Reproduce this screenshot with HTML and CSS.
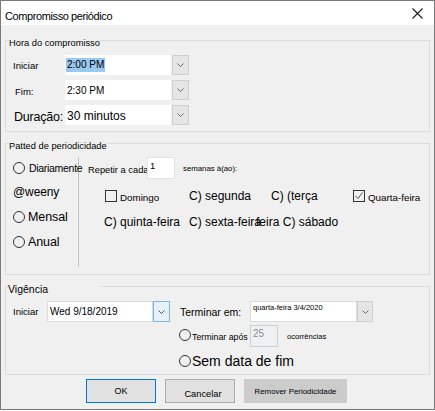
FILE: index.html
```html
<!DOCTYPE html>
<html lang="pt">
<head>
<meta charset="utf-8">
<title>Compromisso periódico</title>
<link rel="stylesheet" href="styles.css">
</head>
<body>
<div class="window">
  <div class="titlebar">
    <span class="title">Compromisso periódico</span>
    <svg class="close" width="11" height="11" viewBox="0 0 11 11"><path d="M0.5 0.5 L10.5 10.5 M10.5 0.5 L0.5 10.5" stroke="#1a1a1a" stroke-width="1.1" fill="none"/></svg>
  </div>

  <div class="group g-time">
    <div class="legend l-time">Hora do compromisso</div>
    <div class="trow">
      <span class="tlabel">Iniciar</span>
      <div class="combo">
        <div class="field"><span class="sel">2:00 PM</span></div>
        <div class="dd"><svg width="7" height="4" viewBox="0 0 7 4"><path d="M0.5 0.5 L3.5 3.5 L6.5 0.5" stroke="#6a6a6a" fill="none"/></svg></div>
      </div>
    </div>
    <div class="trow">
      <span class="tlabel fim">Fim:</span>
      <div class="combo">
        <div class="field"><span class="plain">2:30 PM</span></div>
        <div class="dd"><svg width="7" height="4" viewBox="0 0 7 4"><path d="M0.5 0.5 L3.5 3.5 L6.5 0.5" stroke="#6a6a6a" fill="none"/></svg></div>
      </div>
    </div>
    <div class="trow">
      <span class="tlabel big">Duração:</span>
      <div class="combo">
        <div class="field big"><span class="plain">30 minutos</span></div>
        <div class="dd"><svg width="7" height="4" viewBox="0 0 7 4"><path d="M0.5 0.5 L3.5 3.5 L6.5 0.5" stroke="#6a6a6a" fill="none"/></svg></div>
      </div>
    </div>
  </div>

  <div class="group g-pattern">
    <div class="legend l-pattern">Patted de periodicidade</div>
    <div class="pbody">
      <div class="freq">
        <div class="fopt first"><span class="radio"></span><span class="ftext small">Diariamente</span></div>
        <div class="fopt"><span class="ftext weeny">@weeny</span></div>
        <div class="fopt"><span class="radio"></span><span class="ftext">Mensal</span></div>
        <div class="fopt"><span class="radio"></span><span class="ftext">Anual</span></div>
      </div>
      <div class="pright">
        <div class="repeat">
          <span class="rlabel">Repetir a cada</span>
          <div class="num">1</div>
          <span class="semanas">semanas à(ao):</span>
        </div>
        <div class="days">
          <div class="day small"><span class="cb"></span>Domingo</div>
          <div class="day">C) segunda</div>
          <div class="day">C) (terça</div>
          <div class="day small"><span class="cb"><svg width="10" height="10" viewBox="0 0 10 10"><path d="M1.5 5 L4 7.5 L8.5 1.5" stroke="#555" stroke-width="1" fill="none"/></svg></span>Quarta-feira</div>
          <div class="day">C) quinta-feira</div>
          <div class="day">C) sexta-feira<span class="overlap">feira C) sábado</span></div>
        </div>
      </div>
    </div>
  </div>

  <div class="group g-valid">
    <div class="legend l-valid">Vigência</div>
    <div class="vrow rowa">
      <span class="vlabel">Iniciar</span>
      <div class="combo date">
        <div class="field dfield">Wed 9/18/2019</div>
        <div class="dd active"><svg width="7" height="4" viewBox="0 0 7 4"><path d="M0.5 0.5 L3.5 3.5 L6.5 0.5" stroke="#555" fill="none"/></svg></div>
      </div>
      <span class="endlabel">Terminar em:</span>
      <div class="combo date">
        <div class="field efield">quarta-feira 3/4/2020</div>
        <div class="dd narrow"><svg width="7" height="4" viewBox="0 0 7 4"><path d="M0.5 0.5 L3.5 3.5 L6.5 0.5" stroke="#6a6a6a" fill="none"/></svg></div>
      </div>
    </div>
    <div class="vrow rowb">
      <span class="radio"></span>
      <span class="afterlabel">Terminar após</span>
      <div class="count">25</div>
      <span class="occ">ocorrências</span>
    </div>
    <div class="vrow rowc">
      <span class="radio"></span>
      <span class="nodate">Sem data de fim</span>
    </div>
  </div>

  <div class="buttons">
    <div class="btn ok">OK</div>
    <div class="btn cancel">Cancelar</div>
    <div class="btn remove">Remover Periodicidade</div>
  </div>
</div>
</body>
</html>
```

FILE: styles.css
```css
* { box-sizing: border-box; }
html, body { margin: 0; padding: 0; background: #ffffff; }
body { font-family: "Liberation Sans", Arial, sans-serif; color: #000; }

.window {
  width: 435px;
  height: 410px;
  border: 1px solid #7a7a7a;
  background: #f0f0f0;
  display: flex;
  flex-direction: column;
}

.titlebar {
  height: 24px;
  flex: none;
  background: #fff;
  display: flex;
  align-items: center;
  justify-content: space-between;
  padding: 0 11px 0 4px;
}
.title { font-size: 11px; letter-spacing: -0.4px; padding-top: 5px; white-space: nowrap; }
.close { display: block; }

.group {
  flex: none;
  margin-left: 4px;
  width: 425px;
  border: 1px solid #dcdcdc;
}
.legend {
  width: fit-content;
  height: 14px;
  line-height: 14px;
  margin-top: -5px;
  background: #f0f0f0;
  font-size: 9.3px;
  white-space: nowrap;
}

/* group 1 */
.g-time { margin-top: 15px; padding-bottom: 6px; }
.l-time { margin-left: 3px; }
.trow { display: flex; align-items: center; height: 20px; margin: 5px 0 0 7px; }
.tlabel { width: 52px; font-size: 9.5px; white-space: nowrap; }
.tlabel.fim { padding-left: 2px; padding-top: 2px; }
.tlabel.big { font-size: 12.5px; letter-spacing: -0.2px; padding-left: 1px; padding-top: 3px; }
.combo { display: flex; gap: 1px; height: 20px; }
.field {
  width: 106px;
  background: #fff;
  font-size: 10px;
  display: flex;
  align-items: center;
  padding-left: 1px;
  white-space: nowrap;
}
.field.big { font-size: 12px; padding-top: 2px; }
.sel { background: #99c9ef; line-height: 14px; padding: 0 1px; }
.plain { padding-left: 1px; }
.dd {
  width: 17px;
  flex: none;
  border: 1px solid #cfcfcf;
  background: #e5e5e5;
  display: flex;
  align-items: center;
  justify-content: center;
}
.dd svg { display: block; }

/* group 2 */
.g-pattern { margin-top: 11px; }
.l-pattern { margin-left: 3px; }
.pbody { display: flex; height: 110px; margin: 4px 0 7px 7px; }
.freq {
  width: 66px;
  flex: none;
  border-right: 1px solid #c4c4c4;
  display: flex;
  flex-direction: column;
}
.fopt { display: flex; align-items: center; height: 25px; white-space: nowrap; }
.fopt.first { height: 22px; }
.radio {
  width: 12px;
  height: 12px;
  flex: none;
  border: 1px solid #333;
  border-radius: 50%;
  margin-right: 3px;
}
.ftext { font-size: 12.5px; letter-spacing: -0.1px; }
.ftext.small { font-size: 10.5px; letter-spacing: -0.3px; margin-left: 1px; }
.ftext.weeny { font-size: 12px; }

.pright { flex: 1; padding-left: 9px; }
.repeat { display: flex; align-items: center; height: 22px; }
.rlabel { width: 59px; font-size: 9.3px; padding-top: 4px; white-space: nowrap; }
.num {
  width: 28px;
  height: 22px;
  background: #fff;
  border: 1px solid #e2e2e2;
  font-size: 9.5px;
  line-height: 11px;
  padding: 2px 0 0 2px;
}
.semanas { font-size: 7.8px; margin-left: 8px; white-space: nowrap; }

.days {
  display: grid;
  grid-template-columns: 85px 82px 81px auto;
  grid-auto-rows: 24px;
  row-gap: 2px;
  margin: 5px 0 0 16px;
}
.day { display: flex; align-items: center; font-size: 12px; white-space: nowrap; }
.day.small { font-size: 9.8px; padding-top: 2px; }
.cb {
  width: 12px;
  height: 12px;
  flex: none;
  border: 1px solid #333;
  margin: -2px 3px 0 1px;
  display: flex;
  align-items: center;
  justify-content: center;
}
.day.small:last-of-type .cb { border-color: #555; }
.cb svg { display: block; }
.overlap { margin-left: -5px; }

/* group 3 */
.g-valid { margin-top: 11px; }
.l-valid { margin-left: 2px; width: 92px; font-size: 10.5px; }
.vrow { display: flex; align-items: center; }
.rowa { height: 21px; margin: 5px 0 0 7px; }
.vlabel { width: 34px; font-size: 9.5px; }
.combo.date { gap: 0; height: 21px; }
.dfield { border: 1px solid #dadada; padding-left: 2px; font-size: 10px; }
.dd.active { border-color: #7eb4ea; background: #e5f1fb; }
.endlabel { width: 70px; margin-left: 10px; font-size: 10.5px; white-space: nowrap; }
.efield { width: 107px; border: 1px solid #dadada; font-size: 7.5px; align-items: flex-start; padding: 1px 0 0 2px; }
.dd.narrow { width: 16px; }

.rowb { height: 22px; margin: 3px 0 0 173px; }
.rowb .radio { margin-right: 1px; margin-top: -3px; }
.afterlabel { width: 58px; font-size: 8.8px; padding-top: 2px; white-space: nowrap; }
.count {
  width: 28px;
  height: 22px;
  border: 1px solid #c5cfd9;
  background: #f0f0f0;
  color: #8d8d8d;
  font-size: 10px;
  padding: 2px 0 0 2px;
}
.occ { font-size: 7.6px; margin-left: 9px; white-space: nowrap; }

.rowc { height: 22px; margin: 3px 0 2px 173px; }
.rowc .radio { margin-right: 1px; }
.nodate { font-size: 14px; white-space: nowrap; }

/* buttons */
.buttons { display: flex; gap: 9px; margin: 4px 0 0 85px; }
.btn {
  width: 70px;
  height: 24px;
  background: #e1e1e1;
  border: 1px solid #adadad;
  font-size: 9px;
  display: flex;
  align-items: center;
  justify-content: center;
  white-space: nowrap;
}
.btn.ok { border-color: #0078d7; }
.btn.cancel { font-size: 9.3px; padding: 5px 0 0 6px; }
.btn.remove { width: 103px; background: #cccccc; border-color: #cccccc; font-size: 7.9px; }
```
